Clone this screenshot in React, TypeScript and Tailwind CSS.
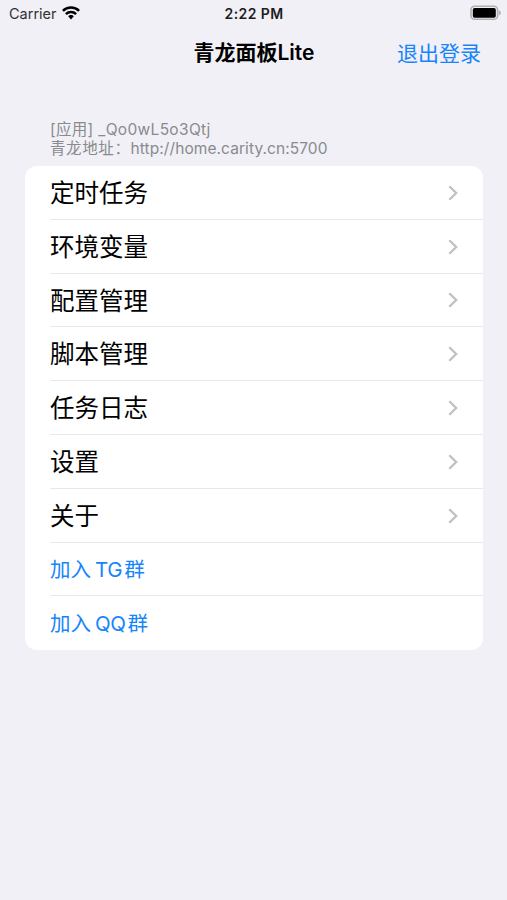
import React from "react";

const rows = ["定时任务", "环境变量", "配置管理", "脚本管理", "任务日志", "设置", "关于"];
const links = [
  ["加入", "TG", "群"],
  ["加入", "QQ", "群"],
];

function Wifi() {
  return (
    <svg width="18" height="14" viewBox="0 0 18 14" className="ml-[5px]" fill="none" stroke="#000" strokeWidth="2.5">
      <path d="M0.900 4.800C5.300 0.400 12.700 0.400 17.100 4.800" />
      <path d="M3.900 8.100C6.700 5.400 11.300 5.400 14.100 8.100" />
      <path d="M9 9.100C7.800 9.100 6.900 9.600 6.200 10.300L9 13.500L11.800 10.300C11.100 9.600 10.200 9.100 9 9.100Z" fill="#000" stroke="none" />
    </svg>
  );
}

function Battery() {
  return (
    <svg width="31" height="16" viewBox="0 0 31 16">
      <rect x="1" y="1.300" width="26.600" height="13" rx="3.600" fill="none" stroke="#b0b0b2" strokeWidth="1.600" />
      <rect x="2.800" y="3" width="23" height="9.800" rx="1.800" fill="#000" />
      <path d="M28.800 5.200V10.400C30.100 9.900 30.800 8.900 30.800 7.800S30.100 5.700 28.800 5.200Z" fill="#b0b0b2" />
    </svg>
  );
}

function Chevron() {
  return (
    <svg width="10" height="17" viewBox="0 0 10 17" fill="none" stroke="#c0c0c2" strokeWidth="2.300">
      <path d="M1.300 2.200L8.200 9L1.300 15.800" />
    </svg>
  );
}

export default function App() {
  return (
    <div className="h-[900px] w-[507px] overflow-hidden bg-[#f1f0f6] font-['Inter','Noto_Sans_CJK_SC',sans-serif] text-black">
      <div className="grid h-7 grid-cols-3 items-center pl-[9px] pr-[6px] pb-[2px]">
        <div className="flex items-center text-[14.500px] text-[#303033]">
          <span className="pt-[2px]">Carrier</span>
          <Wifi />
        </div>
        <div className="pr-[2px] text-center text-[14px] font-semibold tracking-[0.400px] text-[#1c1c1e]">2:22 PM</div>
        <div className="flex justify-end"><Battery /></div>
      </div>
      <header className="grid h-[50px] grid-cols-3 items-center px-[26px] text-[21px]">
        <div />
        <h1 className="whitespace-nowrap pl-px text-center font-semibold">青龙面板Lite</h1>
        <div className="pt-[2px] text-right text-[#1684fb]">退出登录</div>
      </header>
      <div className="mt-[42px] pl-[50px] text-[15.500px] leading-[19px] text-[#8a8a8e]">
        <div className="tracking-[0.320px]">[应用] _Qo0wL5o3Qtj</div>
        <div><span className="tracking-[0.600px]">青龙地址：</span><span className="tracking-[0.080px]">http://home.carity.cn:5700</span></div>
      </div>
      <main className="ml-[25px] mr-[24px] mt-[8px] overflow-hidden rounded-[12px] bg-white pl-[25px]">
        {rows.map((row) => (
          <div key={row} className="flex h-[53.800px] items-center justify-between border-b border-[#e8e8ea] pr-[25px] text-[24.500px]">
            <span className="pt-[2px]">{row}</span>
            <Chevron />
          </div>
        ))}
        {links.map(([a, b, c]) => (
          <div key={b} className="flex h-[53.800px] items-center gap-[2px] border-b border-[#e8e8ea] pt-[2px] text-[20.500px] text-[#1684fb] last:border-0">
            <span>{a}</span>
            <span className="ml-[2px] tracking-[-0.400px]">{b}</span>
            <span>{c}</span>
          </div>
        ))}
      </main>
    </div>
  );
}
